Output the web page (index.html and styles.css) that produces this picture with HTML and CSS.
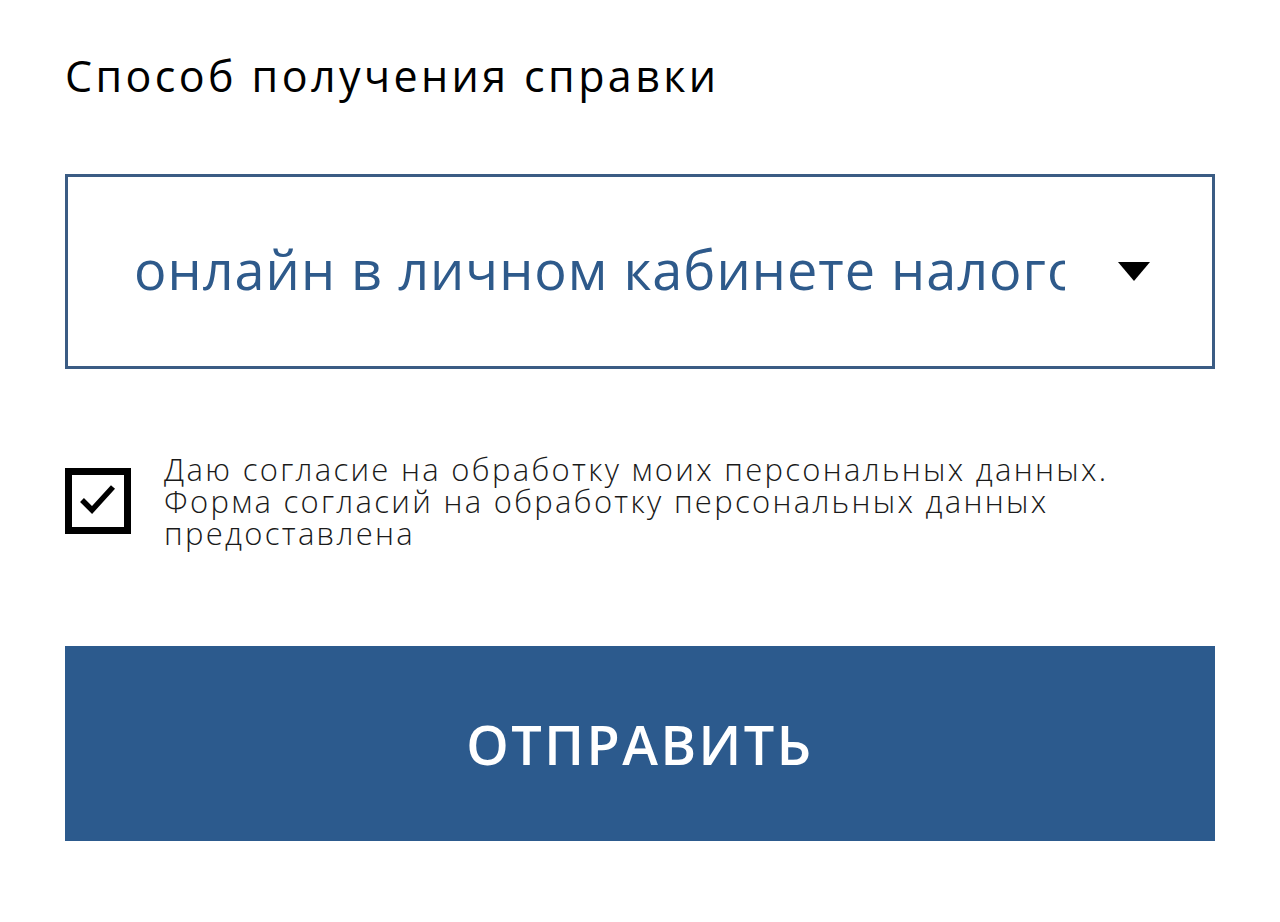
FILE: index.html
```html
<!DOCTYPE html>
<html lang="ru">
<head>
<meta charset="utf-8">
<title>Способ получения справки</title>
<link rel="stylesheet" href="styles.css">
</head>
<body>
<form class="form">
  <h1 class="title">Способ получения справки</h1>
  <div class="select">
    <span class="select-value">онлайн в личном кабинете налогоплательщика</span>
    <span class="select-arrow"></span>
  </div>
  <label class="consent">
    <span class="checkbox">
      <svg viewBox="0 0 66 66" width="66" height="66"><path d="M17 32 L27 42 L48 19" fill="none" stroke="#000" stroke-width="5.5" stroke-linecap="butt" stroke-linejoin="miter"/></svg>
    </span>
    <span class="consent-text">Даю согласие на обработку моих персональных данных.<br>Форма согласий на обработку персональных данных предоставлена</span>
  </label>
  <button type="button" class="submit">ОТПРАВИТЬ</button>
</form>
</body>
</html>
```
FILE: styles.css
```css
html, body {
  margin: 0;
  padding: 0;
  background: #fff;
}
body {
  font-family: "Open Sans", "DejaVu Sans", sans-serif;
  color: #000;
}
.form {
  padding: 46px 65px 0 65px;
  display: flex;
  flex-direction: column;
}
.title {
  margin: 0;
  font-size: 43px;
  font-weight: 400;
  line-height: 60px;
  letter-spacing: 3.4px;
}
.select {
  margin-top: 68px;
  height: 195px;
  box-sizing: border-box;
  border: 3px solid #3b5c84;
  display: flex;
  align-items: center;
  padding: 0 62px 0 66px;
  gap: 53px;
}
.select-value {
  flex: 1;
  overflow: hidden;
  white-space: nowrap;
  color: #2e5a8b;
  font-size: 54px;
  line-height: 70px;
  letter-spacing: 1px;
  margin-top: -6px;
}
.select-arrow {
  width: 0;
  height: 0;
  border-left: 16px solid transparent;
  border-right: 16px solid transparent;
  border-top: 19px solid #000;
}
.consent {
  margin-top: 84px;
  display: flex;
  align-items: center;
  gap: 33px;
}
.checkbox {
  width: 66px;
  height: 66px;
  box-sizing: border-box;
  border: 7px solid #000;
  flex: none;
  position: relative;
}
.checkbox svg {
  position: absolute;
  left: -7px;
  top: -7px;
}
.consent-text {
  font-size: 31px;
  font-weight: 300;
  line-height: 32px;
  letter-spacing: 2.3px;
  color: #1a1a1a;
  max-width: 960px;
}
.submit {
  margin-top: 97px;
  height: 195px;
  border: 0;
  background: #2c5a8d;
  color: #fff;
  font-family: inherit;
  font-size: 54px;
  font-weight: 600;
  letter-spacing: 2.5px;
  padding: 0;
  cursor: pointer;
}
```
